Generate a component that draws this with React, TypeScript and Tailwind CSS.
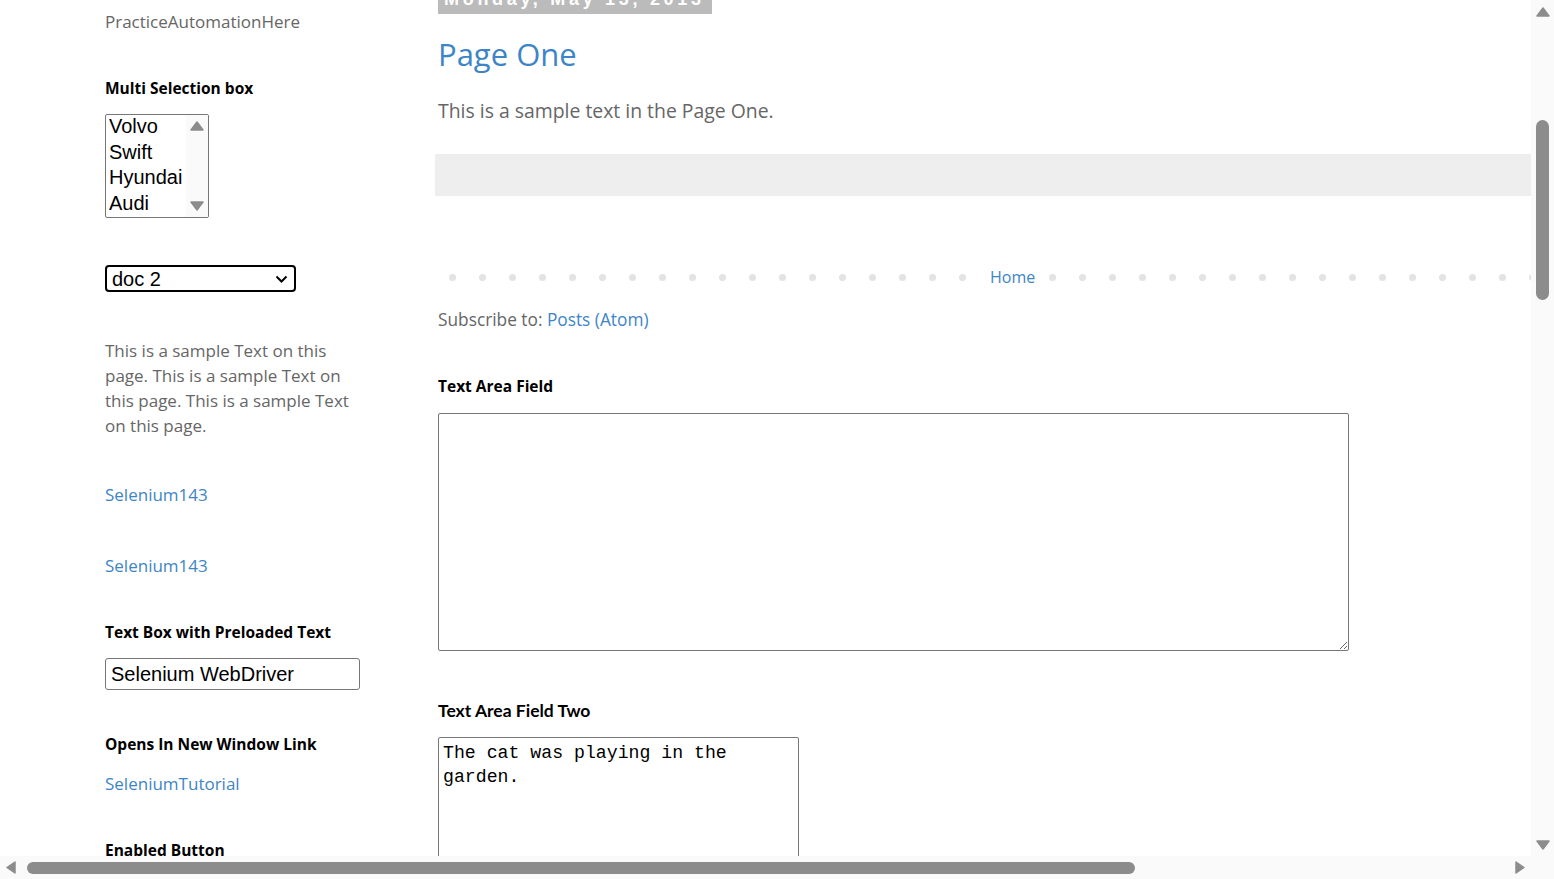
import React from 'react';

const sans = "font-['Open_Sans',sans-serif]";
const arial = "font-['Liberation_Sans',Arial,sans-serif]";

function UpArrow({ className = '' }: { className?: string }) {
  return (
    <svg className={className} width="14" height="10" viewBox="0 0 14 10">
      <path d="M7 1 L13 9 L1 9 Z" fill="#8c8c8c" stroke="#8c8c8c" strokeWidth="1.5" strokeLinejoin="round" />
    </svg>
  );
}

function DownArrow({ className = '' }: { className?: string }) {
  return (
    <svg className={className} width="14" height="10" viewBox="0 0 14 10">
      <path d="M1 1 L13 1 L7 9 Z" fill="#8c8c8c" stroke="#8c8c8c" strokeWidth="1.5" strokeLinejoin="round" />
    </svg>
  );
}

function LeftArrow() {
  return (
    <svg width="10" height="13" viewBox="0 0 10 13">
      <path d="M9 1 L9 12 L1 6.5 Z" fill="#8c8c8c" stroke="#8c8c8c" strokeWidth="1.5" strokeLinejoin="round" />
    </svg>
  );
}

function RightArrow() {
  return (
    <svg width="10" height="13" viewBox="0 0 10 13">
      <path d="M1 1 L9 6.5 L1 12 Z" fill="#8c8c8c" stroke="#8c8c8c" strokeWidth="1.5" strokeLinejoin="round" />
    </svg>
  );
}

function Label({ children, className = '' }: { children: React.ReactNode; className?: string }) {
  return <h2 className={`${sans} text-[15.5px] leading-[20px] font-bold text-black ${className}`}>{children}</h2>;
}

function Dots({ count }: { count: number }) {
  return (
    <>
      {Array.from({ length: count }).map((_, i) => (
        <span key={i} className="w-[30px] shrink-0 flex justify-center">
          <span className="w-[7px] h-[7px] rounded-full bg-[#e3e3e3]" />
        </span>
      ))}
    </>
  );
}

function MultiSelect() {
  const cars = ['Volvo', 'Swift', 'Hyundai', 'Audi'];
  return (
    <div className="mt-[16px] w-[104px] h-[104px] border border-[#767676] rounded-[2px] flex bg-white overflow-hidden">
      <div className={`flex-1 pl-[3px] -mt-[1px] ${arial} text-[20px] leading-[25.5px] text-black`}>
        {cars.map((c) => (
          <div key={c}>{c}</div>
        ))}
      </div>
      <div className="w-[22px] bg-[#fafafa] flex flex-col items-center justify-between py-[6px]">
        <UpArrow />
        <DownArrow />
      </div>
    </div>
  );
}

function LeftColumn() {
  return (
    <div className="w-[255px] shrink-0 ml-[105px] flex flex-col">
      <div className={`mt-[12px] ${sans} text-[17px] leading-[20px] text-[#666666]`}>PracticeAutomationHere</div>
      <Label className="mt-[46px]">Multi Selection box</Label>
      <MultiSelect />
      <div className="mt-[47px] w-[191px] h-[27px] border-2 border-black rounded-[4px] flex items-center justify-between pl-[5px] pr-[6px] bg-white">
        <span className={`${arial} text-[20px] leading-[22px] text-black`}>doc 2</span>
        <svg width="13" height="8" viewBox="0 0 13 8">
          <path d="M1.5 1.5 L6.5 6.5 L11.5 1.5" fill="none" stroke="#000" strokeWidth="2" />
        </svg>
      </div>
      <p className={`mt-[46px] ${sans} text-[17px] leading-[25px] text-[#666666]`}>
        This is a sample Text on this page. This is a sample Text on this page. This is a sample Text on this page.
      </p>
      <a className={`mt-[47px] ${sans} text-[17px] leading-[20px] text-[#3d85c6]`} href="#">Selenium143</a>
      <a className={`mt-[51px] ${sans} text-[17px] leading-[20px] text-[#3d85c6]`} href="#">Selenium143</a>
      <Label className="mt-[46px]">Text Box with Preloaded Text</Label>
      <input
        readOnly
        value="Selenium WebDriver"
        className={`mt-[16px] w-[255px] h-[32px] border border-[#767676] rounded-[3px] px-[5px] ${arial} text-[20px] text-black outline-none`}
      />
      <Label className="mt-[44px]">Opens In New Window Link</Label>
      <a className={`mt-[20px] ${sans} text-[17px] leading-[20px] text-[#3d85c6]`} href="#">SeleniumTutorial</a>
      <Label className="mt-[46px]">Enabled Button</Label>
    </div>
  );
}

function MainColumn() {
  return (
    <div className="flex-1 min-w-0 ml-[75px] flex flex-col">
      <div className="ml-[3px] -mt-[14px] w-fit h-[28px] bg-[#bbbbbb] pl-[6px] pr-[7px] pt-[4px]">
        <span className={`${arial} text-[18px] leading-[18px] font-bold text-white tracking-[3.7px] block`}>Monday, May 13, 2013</span>
      </div>
      <h3 className={`ml-[3px] mt-[20px] ${sans} text-[31px] leading-[40px] text-[#3d85c6]`}>Page One</h3>
      <p className={`ml-[3px] mt-[25px] ${sans} text-[19.4px] leading-[24px] text-[#666666]`}>This is a sample text in the Page One.</p>
      <div className="mt-[31px] h-[42px] bg-[#eeeeee]" />
      <div className="mt-[71px] h-[20px] flex items-center overflow-hidden pl-[2px]">
        <Dots count={18} />
        <a href="#" className={`w-[60px] shrink-0 pl-[13px] ${sans} text-[16px] leading-[20px] text-[#3d85c6]`}>Home</a>
        <Dots count={20} />
      </div>
      <div className={`ml-[3px] mt-[23px] ${sans} text-[17.3px] leading-[20px] text-[#666666]`}>
        Subscribe to: <a href="#" className="text-[#3d85c6]">Posts (Atom)</a>
      </div>
      <Label className="ml-[3px] mt-[46px]">Text Area Field</Label>
      <textarea
        readOnly
        className="ml-[3px] mt-[17px] w-[911px] h-[238px] shrink-0 border border-[#767676] rounded-[2px] bg-white outline-none"
      />
      <h2 className="ml-[3px] mt-[50px] font-['Lato',sans-serif] text-[17.5px] leading-[20px] font-bold text-black">Text Area Field Two</h2>
      <textarea
        readOnly
        value="The cat was playing in the garden."
        className="ml-[3px] mt-[16px] w-[361px] h-[160px] shrink-0 border border-[#767676] rounded-[2px] bg-white px-[4px] pt-[4px] font-['Liberation_Mono',monospace] text-[18.2px] leading-[23.5px] text-black outline-none resize-none"
      />
    </div>
  );
}

export default function App() {
  return (
    <div className="w-[1554px] h-[879px] overflow-hidden flex flex-col bg-white">
      <div className="flex h-[856px]">
        <div className="flex-1 min-w-0 overflow-hidden flex items-start">
          <LeftColumn />
          <MainColumn />
        </div>
        <div className="w-[23px] bg-[#fafafa] flex flex-col items-center">
          <UpArrow className="mt-[7px]" />
          <div className="mt-[103px] w-[13px] h-[180px] rounded-full bg-[#8c8c8c]" />
          <div className="flex-1" />
          <DownArrow className="mb-[6px]" />
        </div>
      </div>
      <div className="flex h-[23px] bg-[#fafafa]">
        <div className="flex-1 flex items-center">
          <div className="ml-[6px]"><LeftArrow /></div>
          <div className="ml-[11px] w-[1108px] h-[12px] rounded-full bg-[#8c8c8c]" />
          <div className="flex-1" />
          <div className="mr-[6px]"><RightArrow /></div>
        </div>
        <div className="w-[23px]" />
      </div>
    </div>
  );
}
